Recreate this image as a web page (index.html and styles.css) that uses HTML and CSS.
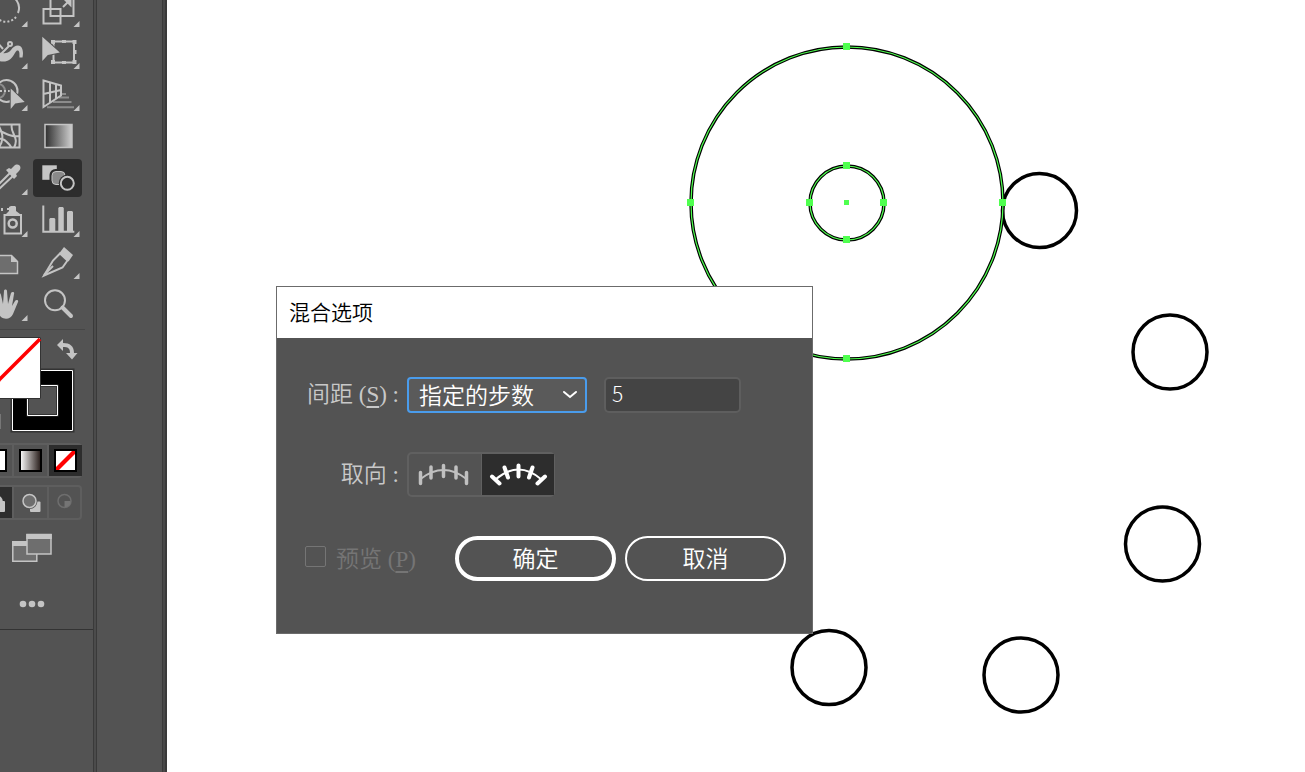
FILE: index.html
```html
<!DOCTYPE html>
<html lang="zh-CN">
<head>
    <meta charset="UTF-8">
    <meta name="viewport" content="width=device-width, initial-scale=1.0">
    <title>混合选项</title>
    <link rel="stylesheet" href="styles.css">
</head>
<body>
    <aside id="toolbar">
        <div class="tools">
            <button class="tool" aria-label="旋转工具">
                <svg viewBox="0 0 49 38">
                    <path class="line" d="M25 4a13 13 0 0 1 12 18"/>
                    <path class="line dots" d="M35 26a13 13 0 0 1-20 0"/>
                    <path class="more" d="M46.500 30v6h-6z"/>
                </svg>
            </button>
            <button class="tool" aria-label="比例缩放工具">
                <svg viewBox="0 0 49 38">
                    <path class="line" d="M17.500 2v23h23V2zM10.500 18h17v14.500h-17z"/>
                    <path class="line" d="M30 16l7-7" stroke-width="2.500"/>
                    <path class="solid" d="M30.500 8.500h8v8z"/>
                    <path class="more" d="M46.500 30v6h-6z"/>
                </svg>
            </button>
            <button class="tool" aria-label="变形工具">
                <svg viewBox="0 0 49 38">
                    <path class="solid" d="M12 18c8 2 14 4 18-1 2-3 4-4.500 7-4.500 4 0 6 5 4.500 12h-3c0-5 0-7-2-7-3 0-4 11-14 11-5 0-8-1-11-3z"/>
                    <circle class="line" cx="29" cy="11" r="2"/>
                    <path class="line" d="M28 13l-9 9M15 8l7 8"/>
                    <path class="more" d="M46.500 30v6h-6z"/>
                </svg>
            </button>
            <button class="tool" aria-label="自由变换工具">
                <svg viewBox="0 0 49 38">
                    <path class="line" d="M20.500 8.500h20.500v21H20.500z"/>
                    <path class="solid" d="M18 7h4v4h-4zM29 7h4v3h-4zM39.500 7h4v4h-4zM40.500 17h3v4h-3zM39.500 27h4v4h-4zM29 28h4v3h-4zM18 27h4v4h-4z"/>
                    <path class="cursor" d="M9.300 3.700V28l5.500-6 12-2.500z"/>
                    <path class="more" d="M46.500 30v6h-6z"/>
                </svg>
            </button>
            <button class="tool" aria-label="形状生成器工具">
                <svg viewBox="0 0 49 38">
                    <circle class="line" cx="25.500" cy="16" r="11"/>
                    <circle class="dim" cx="17" cy="16" r="7"/>
                    <path class="line dots" d="M15 16h18"/>
                    <path class="cursor" d="M29.700 13.500v20.500l4.500-5.500 9.500-1.500z"/>
                    <path class="more" d="M46.500 30v6h-6z"/>
                </svg>
            </button>
            <button class="tool" aria-label="透视网格工具">
                <svg viewBox="0 0 49 38">
                    <path class="dim" d="M28 19h5M26 22.500h10M20 27h18.500M14 32.300h27"/>
                    <path class="line" d="M10.500 5.500l17.500 5v10L10.500 32zM17 7.500v20M23 9v15M10.500 19l17.500-4"/>
                    <path class="more" d="M46.500 30v6h-6z"/>
                </svg>
            </button>
            <button class="tool" aria-label="网格工具">
                <svg viewBox="0 0 49 38">
                    <path class="line" d="M10.500 7.500h28v23h-28zM17 7.500c4 7 7 14 1 23M31 7.500c-3 7 8 13 2 23M10.500 16c8-8 15 6 28 3M10.500 26c8-8 14-4 20 4.500"/>
                </svg>
            </button>
            <button class="tool" aria-label="渐变工具">
                <svg viewBox="0 0 49 38">
                    <defs>
                        <linearGradient id="ramp">
                            <stop offset="0" stop-color="#2e2e2e"/>
                            <stop offset="1" stop-color="#cfcfcf"/>
                        </linearGradient>
                    </defs>
                    <rect x="12" y="7.500" width="27" height="23" fill="url(#ramp)" stroke="#c4c4c4" stroke-width="1.500"/>
                </svg>
            </button>
            <button class="tool" aria-label="吸管工具">
                <svg viewBox="0 0 49 38">
                    <path class="line" d="M29 14L14 29l-2 4 4-1 17-16"/>
                    <path class="solid" d="M25 11l3-2 2 1 3-3c4-4 9 1 5 5l-3 3 1 2-3 3z"/>
                    <path class="more" d="M46.500 30v6h-6z"/>
                </svg>
            </button>
            <button class="tool active" aria-label="混合工具">
                <svg viewBox="0 0 49 38">
                    <path class="solid" d="M9.300 6.300h14.500v14.500H9.300z"/>
                    <rect x="18" y="11.500" width="15" height="15" rx="4.500" fill="#8a8a8a" stroke="#2d2d2d" stroke-width="3"/>
                    <rect x="19" y="12.500" width="13" height="13" rx="4" fill="#8a8a8a" stroke="#c4c4c4"/>
                    <circle cx="34.300" cy="24.300" r="8.500" fill="#2d2d2d"/>
                    <circle class="line" cx="34.300" cy="24.300" r="6.500"/>
                </svg>
            </button>
            <button class="tool" aria-label="符号喷枪工具">
                <svg viewBox="0 0 49 38">
                    <path class="line" d="M23.500 14h16.500v18.500H23.500z"/>
                    <path class="solid" d="M25 13l3-3V6l2-1h4l1 1v4l4 3zM26 7h3v2h-3zM20 7h2v3h-2zM15 4h2v2h-2z"/>
                    <circle cx="31.700" cy="22.500" r="4" fill="none" stroke="#c4c4c4" stroke-width="2.500"/>
                    <path class="more" d="M46.500 30v6h-6z"/>
                </svg>
            </button>
            <button class="tool" aria-label="柱形图工具">
                <svg viewBox="0 0 49 38">
                    <path class="line" d="M10.300 4.500v26.200h31"/>
                    <path class="solid" d="M16.300 30V18l1-1h4l1 1v12zM25.300 30V7l1-1h3.500l1 1v23zM34 30V11l1-1h4l1 1v19z"/>
                    <path class="more" d="M46.500 30v6h-6z"/>
                </svg>
            </button>
            <button class="tool" aria-label="画板工具">
                <svg viewBox="0 0 49 38">
                    <path d="M10 12.500h20.500l6 6v12H10z" fill="#6e6e6e" stroke="#c4c4c4" stroke-width="1.500"/>
                    <path class="solid" d="M30 12v7h7z"/>
                </svg>
            </button>
            <button class="tool" aria-label="切片工具">
                <svg viewBox="0 0 49 38">
                    <path class="line" d="M27 10.500l-7 7-9 15 18.500-8 5-7z"/>
                    <path class="line" d="M11 32l9-9"/>
                    <path class="solid" d="M31 4l9 8-4.500 6.500L26.500 10z"/>
                    <path class="more" d="M46.500 30v6h-6z"/>
                </svg>
            </button>
            <button class="tool" aria-label="抓手工具">
                <svg viewBox="0 0 49 38">
                    <path class="solid" d="M20 32l-8-11c-1-2 1-3 3-2l4 4-2-13c0-2 2-3 3 0l2 9 1-13c0-2 3-2 3 0l1 13 3-11c1-2 4-1 3 1l-2 12 3-5c1-2 4-1 3 1l-5 12c-2 5-8 6-12 3z"/>
                    <path class="more" d="M46.500 30v6h-6z"/>
                </svg>
            </button>
            <button class="tool" aria-label="缩放工具">
                <svg viewBox="0 0 49 38">
                    <circle class="line" cx="22" cy="15.300" r="10"/>
                    <path d="M29.500 22.500l8.500 8.500" fill="none" stroke="#c4c4c4" stroke-width="4" stroke-linecap="round"/>
                </svg>
            </button>
        </div>

        <svg class="swatches" viewBox="0 1 93 105" role="img" aria-label="填色和描边">
            <path d="M11.500 40.500h62v62h-62zM27.500 56.500v30h30v-30z" fill="#000" fill-rule="evenodd" stroke="#333" stroke-width="2"/>
            <path d="M12.500 41.500h60v60h-60zM27.500 56.500v30h30v-30z" fill="none" stroke="#fff"/>
            <path d="M28.500 57.500h28v28h-28z" fill="none" stroke="#333"/>
            <path d="M-20.500 8.500h61v61h-61z" fill="#fff" stroke="#333"/>
            <path d="M-20 70L40 10" stroke="#f00" stroke-width="3.500"/>
            <path d="M0 85h1v15H0z" fill="#777"/>
            <path class="solid" d="M57 16l6-6v4c7 0 11 3 11 10h3.500l-5.500 6.500L66 24h4c0-5-2-6-7-6v4z"/>
        </svg>

        <div class="modes">
            <button aria-label="颜色">
                <svg viewBox="0 0 33 31"><rect x="6" y="5" width="21" height="21" fill="#fff" stroke="#000" stroke-width="2"/></svg>
            </button>
            <button aria-label="渐变">
                <svg viewBox="0 0 33 31">
                    <defs>
                        <linearGradient id="fade">
                            <stop offset="0" stop-color="#fff"/>
                            <stop offset="1" stop-color="#231815"/>
                        </linearGradient>
                    </defs>
                    <rect x="6" y="5" width="21" height="21" fill="url(#fade)" stroke="#000" stroke-width="2"/>
                </svg>
            </button>
            <button class="active" aria-label="无">
                <svg viewBox="0 0 33 31">
                    <rect x="6" y="5" width="21" height="21" fill="#fff" stroke="#000" stroke-width="2"/>
                    <path d="M7 22v3h3L26 9V6h-3z" fill="#f00"/>
                </svg>
            </button>
        </div>
        <div class="modes">
            <button class="active" aria-label="正常绘图">
                <svg viewBox="0 0 33 31">
                    <circle class="solid" cx="17" cy="15" r="7"/>
                    <rect class="solid" x="16" y="14" width="10" height="11" rx="1"/>
                </svg>
            </button>
            <button aria-label="背面绘图">
                <svg viewBox="0 0 33 31">
                    <rect class="solid" x="16" y="14.500" width="10.500" height="10.500" rx="1"/>
                    <circle cx="15.500" cy="14" r="8" fill="#535353"/>
                    <circle cx="15.500" cy="14" r="6.500" fill="#6e6e6e" stroke="#c4c4c4" stroke-width="1.500"/>
                </svg>
            </button>
            <button aria-label="内部绘图">
                <svg viewBox="0 0 33 31">
                    <circle cx="15.500" cy="14" r="6.500" fill="none" stroke="#6e6e6e" stroke-width="1.500"/>
                    <path d="M15.500 14h6c0 4-2 6-6 6z" fill="#757575"/>
                </svg>
            </button>
        </div>

        <button class="screen-mode" aria-label="更改屏幕模式">
            <svg viewBox="0 0 40 30">
                <path d="M.8 8.800h24v19.500H.8z" fill="#6e6e6e" stroke="#c4c4c4" stroke-width="1.500"/>
                <path class="solid" d="M0 8h25v5H0z"/>
                <path d="M15 1.500h24V21H15z" fill="#6e6e6e" stroke="#c4c4c4" stroke-width="1.500"/>
                <path class="solid" d="M14.300 1h25.500v5H14.300z"/>
            </svg>
        </button>
        <button class="edit-tools" aria-label="编辑工具栏">
            <svg viewBox="0 0 26 8">
                <circle class="solid" cx="4" cy="4" r="3.300"/>
                <circle class="solid" cx="13" cy="4" r="3.300"/>
                <circle class="solid" cx="22" cy="4" r="3.300"/>
            </svg>
        </button>
    </aside>
    <div id="dock"></div>

    <main id="canvas">
        <svg class="artwork" role="img" aria-label="画板">
            <g class="shape">
                <circle cx="872.500" cy="210.500" r="37"/>
                <circle cx="1003" cy="352" r="37"/>
                <circle cx="995.500" cy="544" r="37"/>
                <circle cx="854" cy="675" r="37"/>
                <circle cx="662" cy="667.500" r="37"/>
                <circle cx="680" cy="203" r="156"/>
                <circle cx="680" cy="203" r="37"/>
            </g>
            <g class="selection">
                <circle cx="680" cy="203" r="156"/>
                <circle cx="680" cy="203" r="37"/>
            </g>
            <!-- anchor points -->
            <path class="anchors" d="M676 43h7v7h-7zM676 355h7v7h-7zM520 199h7v7h-7zM832 199h7v7h-7zM676 162h7v7h-7zM676 236h7v7h-7zM639 199h7v7h-7zM713 199h7v7h-7zM677 200h5v5h-5z"/>
        </svg>

        <form id="dialog" role="dialog" aria-labelledby="dialog-title" onsubmit="return false">
            <h1 id="dialog-title">混合选项</h1>
            <div class="content">
                <div class="row">
                    <label class="name" for="spacing">间距 (<u>S</u>) :</label>
                    <div class="select">
                        <select id="spacing">
                            <option>平滑颜色</option>
                            <option selected>指定的步数</option>
                            <option>指定的距离</option>
                        </select>
                        <svg viewBox="0 0 16 10"><path d="M2 2l6 5 6-5"/></svg>
                    </div>
                    <input type="text" class="steps" value="5" aria-label="步数">
                </div>
                <div class="row">
                    <span class="name" id="orientation">取向 :</span>
                    <div class="toggle" role="group" aria-labelledby="orientation">
                        <button type="button" aria-label="对齐页面">
                            <svg viewBox="0 0 72 41">
                                <path d="M11.500 25q23-18 46 0" stroke-width="2"/>
                                <path d="M11.500 18.500v11M22 13v11M34.500 11.500v11M47 13v11M57.500 18.500v11" stroke-width="3.500"/>
                            </svg>
                        </button>
                        <button type="button" class="active" aria-label="对齐路径">
                            <svg viewBox="0 0 72 41">
                                <path d="M13.500 25.500q23-20 46 0" stroke-width="2"/>
                                <path d="M10 22.500l7.500 7M22.500 13.500l3.500 10M36.500 11.500v11M50.500 13.500l-3.500 10M63 22.500l-7.500 7" stroke-width="4"/>
                            </svg>
                        </button>
                    </div>
                </div>
                <div class="row">
                    <label class="preview"><input type="checkbox" disabled><span>预览 (<u>P</u>)</span></label>
                    <div class="actions">
                        <button type="submit" class="primary">确定</button>
                        <button type="button">取消</button>
                    </div>
                </div>
            </div>
        </form>
    </main>
</body>
</html>
```
FILE: styles.css
```css
* {
    box-sizing: border-box;
}
body {
    margin: 0;
    height: 100vh;
    display: flex;
    overflow: hidden;
    background: #535353;
    font-family: 'Liberation Serif', 'Noto Sans CJK SC', serif;
}
button {
    padding: 0;
    border: none;
    background: none;
    font: inherit;
    color: inherit;
    cursor: pointer;
}
svg {
    display: block;
}

/* toolbar */
#toolbar {
    flex: none;
    align-self: flex-start;
    width: 93px;
    height: 630px;
    overflow: hidden;
    border-bottom: 1px solid #333333;
}
.tools {
    display: grid;
    grid-template-columns: 49px 49px;
    gap: 4px 3px;
    width: 104px;
    margin: -9px 0 0 -19px;
    padding-bottom: 6px;
    border-bottom: 1px solid #464646;
}
.tool {
    height: 38px;
    border-radius: 4px;
}
.active {
    background: #2d2d2d;
}
.line {
    fill: none;
    stroke: #c4c4c4;
    stroke-width: 2px;
}
.dots {
    stroke-dasharray: 2 2;
}
.dim {
    fill: none;
    stroke: #8c8c8c;
    stroke-width: 2px;
}
.solid, .more {
    fill: #c4c4c4;
}
.cursor {
    fill: #c4c4c4;
    stroke: #535353;
    stroke-width: 2px;
    paint-order: stroke;
}
.swatches {
    width: 93px;
    height: 105px;
    margin-bottom: 8px;
}
.modes {
    display: flex;
    width: 105px;
    height: 35px;
    margin: 0 0 7px -23px;
    border: 2px solid #5e5e5e;
    border-radius: 4px;
}
.modes button {
    flex: 1;
}
.modes button + button {
    border-left: 2px solid #5e5e5e;
}
.modes svg {
    width: 33px;
    height: 31px;
}
.screen-mode {
    display: block;
    width: 40px;
    height: 30px;
    margin: 13px 0 0 12px;
}
.edit-tools {
    display: block;
    width: 26px;
    margin: 37px 0 0 19px;
}

/* collapsed dock between toolbar and canvas */
#dock {
    flex: none;
    width: 74px;
    border: solid #3a3a3a;
    border-width: 0 2px 0 1px;
    background: linear-gradient(90deg, #4b4b4b 2px, #3a3a3a 2px, #3a3a3a 3px, #535353 3px, #535353 68px, #3a3a3a 68px, #3a3a3a 69px, #484848 69px);
}

/* canvas */
#canvas {
    flex: 1;
    position: relative;
    overflow: hidden;
    background: #ffffff;
}
.artwork {
    width: 100%;
    height: 100%;
}
.shape {
    fill: none;
    stroke: #000000;
    stroke-width: 3.5px;
}
.selection {
    fill: none;
    stroke: #4fff4f;
    stroke-width: 1.2px;
}
.anchors {
    fill: #4fff4f;
}

/* dialog */
#dialog {
    position: absolute;
    left: 109px;
    top: 286px;
    width: 537px;
    border: 1px solid #6b6b6b;
    background: #535353;
    color: #c8c8c8;
    font-size: 23px;
}
#dialog h1 {
    margin: 0;
    padding: 0 12px 2px;
    background: #ffffff;
    color: #000000;
    font-family: 'Noto Sans CJK SC', sans-serif;
    font-size: 21px;
    font-weight: 350;
    line-height: 49px;
}
.content {
    display: flex;
    flex-direction: column;
    gap: 39px;
    padding: 39px 26px 52px 28px;
    font-weight: 350;
}
.row {
    display: flex;
    align-items: center;
}
.name {
    width: 94px;
    margin-right: 8px;
    line-height: 32px;
    text-align: right;
    white-space: nowrap;
}
u {
    text-underline-offset: 4px;
    text-decoration-thickness: 2px;
}
.select {
    position: relative;
    width: 180px;
    margin-right: 17px;
}
.select select {
    display: block;
    width: 100%;
    height: 36px;
    padding: 2px 10px 0;
    appearance: none;
    border: 2px solid #4a9cec;
    border-radius: 4px;
    background: #5a5a5a;
    color: #ffffff;
    font: inherit;
}
.select svg {
    position: absolute;
    right: 9px;
    top: 13px;
    width: 16px;
    height: 10px;
    fill: none;
    stroke: #ffffff;
    stroke-width: 2px;
    stroke-linecap: round;
    pointer-events: none;
}
.steps {
    width: 137px;
    height: 36px;
    padding: 0 6px 4px;
    border: 2px solid #5e5e5e;
    border-radius: 5px;
    background: #444444;
    color: #ffffff;
    font-family: 'Noto Sans CJK SC', sans-serif;
    font-size: 21px;
    font-weight: 300;
}
.toggle {
    display: flex;
    width: 148px;
    height: 45px;
    border: 2px solid #606060;
    border-radius: 5px;
}
.toggle button {
    flex: 1;
}
.toggle button + button {
    border-left: 1px solid #606060;
}
.toggle svg {
    width: 72px;
    height: 41px;
    fill: none;
    stroke: #c0c0c0;
    stroke-linecap: round;
}
.toggle .active svg {
    stroke: #ffffff;
}
.preview {
    display: flex;
    align-items: center;
    padding-bottom: 4px;
    color: #757575;
}
.preview input {
    appearance: none;
    width: 21px;
    height: 21px;
    margin: 0 10px 0 0;
    border: 1px solid #757575;
    border-radius: 2px;
}
.actions {
    display: flex;
    gap: 9px;
    margin-left: auto;
}
.actions button {
    width: 161px;
    height: 45px;
    padding-bottom: 4px;
    border: 2px solid #ffffff;
    border-radius: 23px;
    color: #ffffff;
}
.actions .primary {
    border-width: 4px;
}
```
